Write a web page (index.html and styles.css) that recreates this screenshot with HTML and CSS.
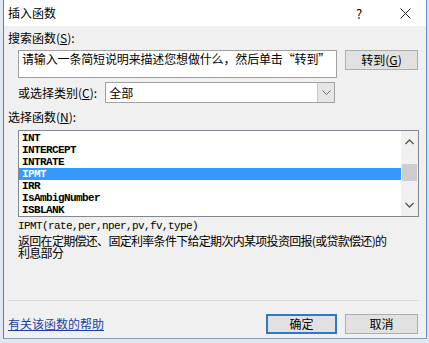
FILE: index.html
```html
<!DOCTYPE html>
<html lang="zh-CN">
<head>
  <meta charset="UTF-8">
  <title>插入函数</title>
  <link rel="stylesheet" href="styles.css">
</head>
<body>
  <div class="dialog">
    <!-- 标题栏 -->
    <div class="titlebar">
      <span class="title">插入函数</span>
      <span class="help">?</span>
      <span class="close">
        <svg width="11" height="11" viewBox="0 0 11 11">
          <path d="M0.5 0.5 L10.5 10.5 M10.5 0.5 L0.5 10.5" stroke="#222" stroke-width="1" fill="none"/>
        </svg>
      </span>
    </div>

    <div class="content">
      <div class="label">搜索函数(<u>S</u>):</div>
      <div class="search-row">
        <div class="search-box">请输入一条简短说明来描述您想做什么，然后单击“转到”</div>
        <button class="btn">转到(<u>G</u>)</button>
      </div>

      <div class="category-row">
        <span class="label">或选择类别(<u>C</u>):</span>
        <div class="select">
          <span class="select-text">全部</span>
          <span class="select-arrow">
            <svg width="9" height="6" viewBox="0 0 9 6">
              <path d="M0.5 0.5 L4.5 4.5 L8.5 0.5" stroke="#666" stroke-width="1" fill="none"/>
            </svg>
          </span>
        </div>
      </div>

      <div class="label list-label">选择函数(<u>N</u>):</div>
      <div class="listbox">
        <ul class="items">
          <li>INT</li>
          <li>INTERCEPT</li>
          <li>INTRATE</li>
          <li class="selected">IPMT</li>
          <li>IRR</li>
          <li>IsAmbigNumber</li>
          <li>ISBLANK</li>
        </ul>
        <div class="scrollbar">
          <svg class="arrow-up" width="9" height="6" viewBox="0 0 9 6">
            <path d="M0.5 5 L4.5 1 L8.5 5" stroke="#555" stroke-width="1.3" fill="none"/>
          </svg>
          <div class="thumb"></div>
          <svg class="arrow-down" width="9" height="6" viewBox="0 0 9 6">
            <path d="M0.5 1 L4.5 5 L8.5 1" stroke="#555" stroke-width="1.3" fill="none"/>
          </svg>
        </div>
      </div>

      <div class="signature">IPMT(rate,per,nper,pv,fv,type)</div>
      <div class="description">返回在定期偿还、固定利率条件下给定期次内某项投资回报(或贷款偿还)的利息部分</div>
    </div>

    <div class="footer">
      <a class="help-link" href="#">有关该函数的帮助</a>
      <div class="buttons">
        <button class="btn default">确定</button>
        <button class="btn">取消</button>
      </div>
    </div>
  </div>
</body>
</html>
```

FILE: styles.css
```css
* {
  margin: 0;
  padding: 0;
  box-sizing: border-box;
}

body {
  width: 429px;
  height: 343px;
  overflow: hidden;
  background: #dfe7f1;
  font-family: "Noto Sans CJK SC", "Noto Sans", sans-serif;
  font-size: 12px;
  color: #000;
}

.dialog {
  margin-left: 3px;
  width: 424px;
  height: 339px;
  background: #f0f0f0;
  border-left: 1px solid #6e7c8c;
  border-right: 1px solid #5e8ecb;
  border-bottom: 1px solid #8a9cb0;
  display: flex;
  flex-direction: column;
}

.titlebar {
  height: 26px;
  background: #fff;
  display: flex;
  align-items: center;
  padding-left: 4px;
}

.title {
  flex: 1;
  line-height: 12px;
}

.help {
  width: 12px;
  font-size: 13px;
  margin-right: 32px;
}

.close {
  width: 11px;
  height: 11px;
  margin-right: 15px;
  display: flex;
}

.content {
  padding: 6px 0 0 4px;
  flex: 1;
}

.label {
  line-height: 12px;
  white-space: nowrap;
}

.search-row {
  display: flex;
  margin: 6px 0 0 10px;
}

.search-box {
  width: 319px;
  height: 28px;
  background: #fff;
  border: 1px solid #a0a0a0;
  padding: 2px 0 0 3px;
  line-height: 12px;
  letter-spacing: -0.15px;
  white-space: nowrap;
  overflow: hidden;
}

.btn {
  width: 73px;
  height: 20px;
  margin-left: 8px;
  background: #e1e1e1;
  border: 1px solid #adadad;
  font-family: "Noto Sans CJK SC", "Noto Sans", sans-serif;
  font-size: 12px;
  line-height: 12px;
  color: #000;
}

.category-row {
  display: flex;
  align-items: center;
  margin: 4px 0 0 10px;
}

.select {
  margin-left: 8px;
  width: 230px;
  height: 21px;
  background: #fff;
  border: 1px solid #a0a0a0;
  display: flex;
  align-items: center;
}

.select-text {
  flex: 1;
  padding-left: 3px;
  line-height: 12px;
}

.select-arrow {
  width: 17px;
  height: 19px;
  background: #e6e6e6;
  border-left: 1px solid #c8c8c8;
  display: flex;
  align-items: center;
  justify-content: center;
}

.list-label {
  margin-top: 8px;
}

.listbox {
  margin: 7px 0 0 10px;
  width: 401px;
  height: 87px;
  background: #fff;
  border: 1px solid #828790;
  display: flex;
}

.items {
  list-style: none;
  flex: 1;
  padding-top: 1px;
  font-family: "Liberation Mono", "DejaVu Sans Mono", monospace;
  font-size: 11px;
  letter-spacing: -0.6px;
  font-weight: bold;
}

.items li {
  height: 12px;
  line-height: 12px;
  padding-left: 3px;
}

.items li.selected {
  background: #3399ff;
  color: #fff;
}

.scrollbar {
  width: 17px;
  background: #f0f0f0;
  display: flex;
  flex-direction: column;
  align-items: center;
}

.arrow-up {
  margin-top: 8px;
}

.thumb {
  width: 15px;
  height: 17px;
  margin-top: 19px;
  background: #cdcdcd;
}

.arrow-down {
  margin-top: 21px;
}

.signature {
  margin: 3px 0 0 10px;
  line-height: 12px;
  font-family: "Liberation Mono", "DejaVu Sans Mono", monospace;
  font-size: 11px;
  letter-spacing: -0.6px;
}

.description {
  margin: 3px 0 0 10px;
  width: 378px;
  line-height: 12px;
  font-size: 12px;
  letter-spacing: -0.7px;
}

.footer {
  margin: 0 7px 0 4px;
  height: 38px;
  padding-top: 8px;
  border-top: 1px solid #dcdcdc;
  display: flex;
  align-items: center;
  justify-content: space-between;
}

.help-link {
  color: #1c3fa6;
  text-decoration: underline;
  line-height: 12px;
}

.buttons {
  display: flex;
  margin-right: 1px;
}

.btn.default {
  border: 2px solid #2f79c8;
  width: 71px;
}
```
